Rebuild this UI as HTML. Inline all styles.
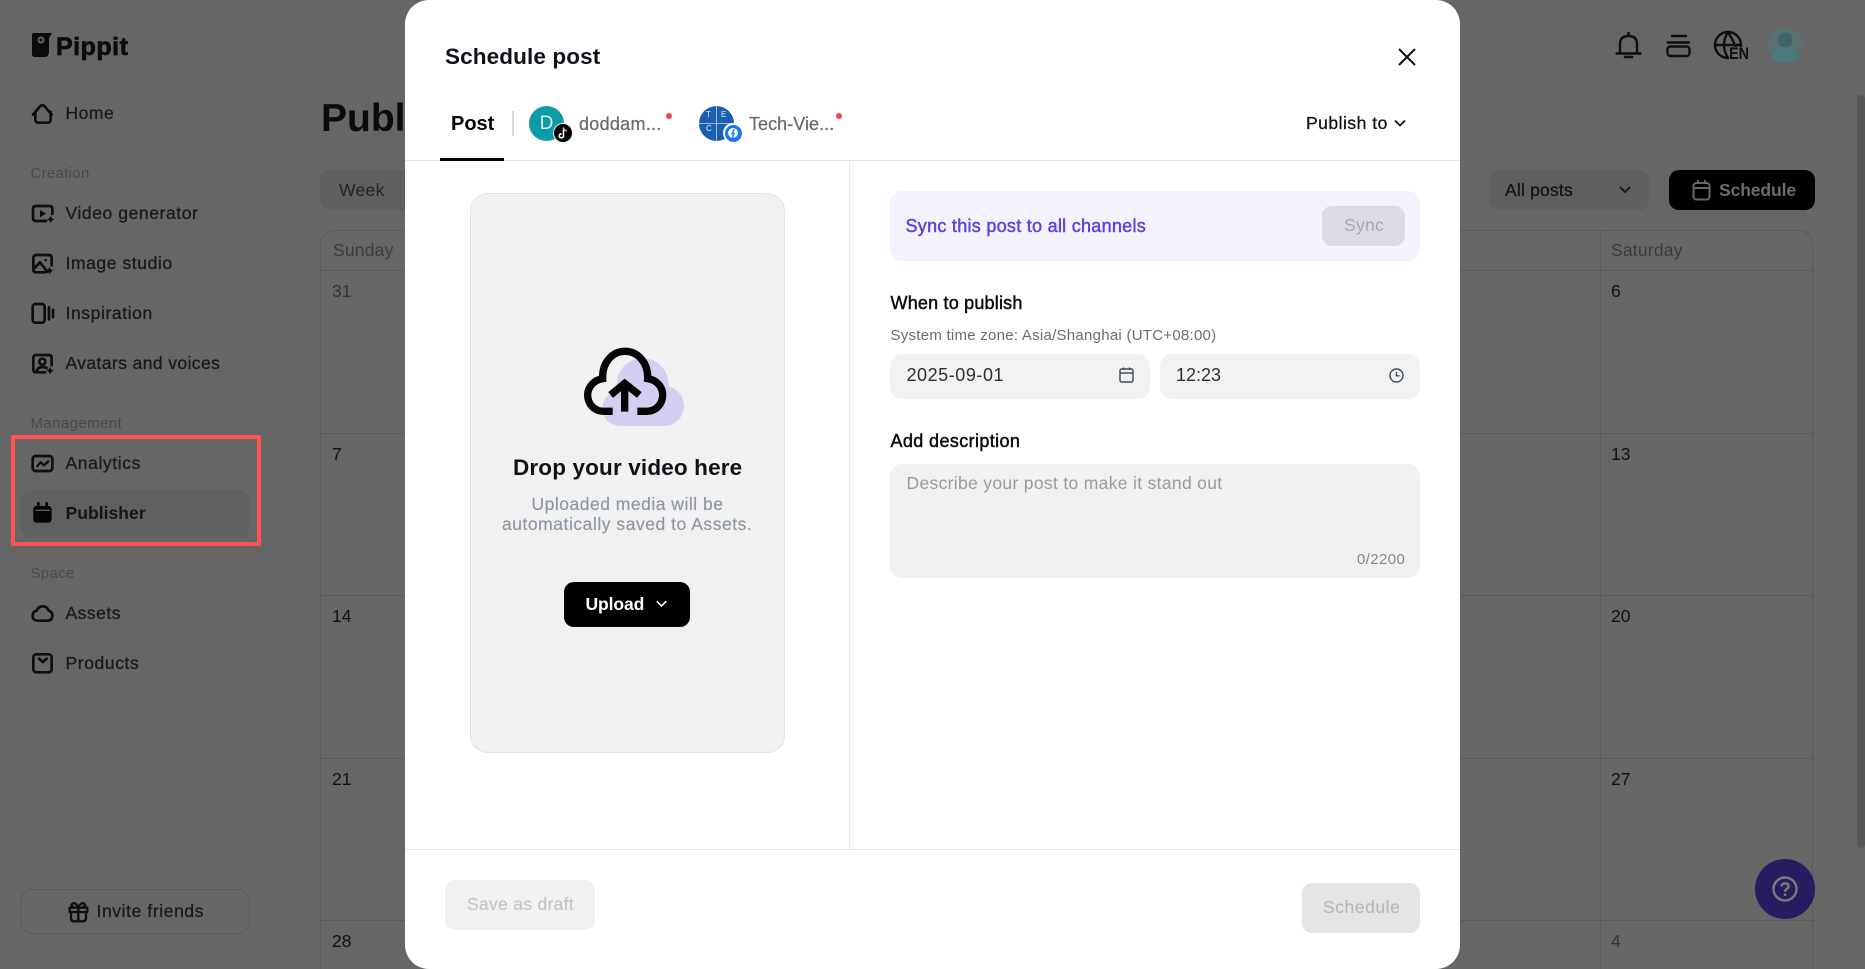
<!DOCTYPE html>
<html lang="en"><head><meta charset="utf-8"><title>Schedule post</title>
<style>
html,body{margin:0;padding:0;width:1865px;height:969px;overflow:hidden;background:#666;font-family:"Liberation Sans",Arial,sans-serif}
#w{position:relative;width:1865px;height:969px;overflow:hidden;background:#666;filter:blur(.3px)}
.a{position:absolute}
.t{position:absolute;white-space:nowrap;line-height:24px;height:24px;font-size:17.5px}
.s{color:#1a1a1a;letter-spacing:.5px;left:65.5px;-webkit-text-stroke:.3px currentColor}
.l{color:#484848;font-size:15px;letter-spacing:.3px;left:30.5px}
.m{-webkit-text-stroke:.45px currentColor}
.b{font-weight:700}
.d{color:#333;left:333px}
.line{position:absolute;background:#5a5a5a}
svg{position:absolute;overflow:visible}
</style></head><body><div id="w">

<!-- background page -->
<svg style="left:32px;top:32px" width="20" height="26" viewBox="0 0 20 26"><path d="M0 3Q0 1 2 1H20L17 6V20Q17 25 12 25H3Q0 25 0 22Z" fill="#0b0b0b"/><circle cx="9" cy="8" r="3.5" fill="#666"/><circle cx="9" cy="8" r="1.6" fill="#0b0b0b"/></svg>
<div class="t b" style="left:56px;top:35px;font-size:25px;letter-spacing:.5px;color:#0d0d0d;-webkit-text-stroke:.7px #0d0d0d">Pippit</div>

<div class="t s" style="top:101px">Home</div>
<div class="t l" style="top:162px">Creation</div>
<div class="t s" style="top:201px;letter-spacing:.58px">Video generator</div>
<div class="t s" style="top:251px;letter-spacing:.58px">Image studio</div>
<div class="t s" style="top:301px;letter-spacing:.6px">Inspiration</div>
<div class="t s" style="top:351px;letter-spacing:.4px">Avatars and voices</div>
<div class="t l" style="top:412px;letter-spacing:.4px">Management</div>
<div class="t s" style="top:451px;letter-spacing:.6px">Analytics</div>
<div class="a" style="left:20px;top:490px;width:230px;height:48px;background:#5f6061;border-radius:12px"></div>
<div class="t s b" style="top:501px;letter-spacing:.05px;color:#151515;-webkit-text-stroke:0">Publisher</div>
<div class="t l" style="top:562px">Space</div>
<div class="t s" style="top:601px">Assets</div>
<div class="t s" style="top:651px;letter-spacing:.6px">Products</div>
<div class="a" style="left:20px;top:889px;width:228px;height:43px;border:1px solid #5a5a5a;border-radius:13px"></div>
<div class="t s" style="left:96.5px;top:899px;letter-spacing:.6px">Invite friends</div>

<!-- sidebar icons, coordinates in 3x units -->
<svg style="left:0;top:0" width="410" height="969" viewBox="0 0 1230 2907" fill="none" stroke="#0f0f0f" stroke-width="8" stroke-linejoin="round" stroke-linecap="round">
<path d="M99 344L120 319Q127 312 134 319L155 344M106 336V358Q106 368 116 368H142Q152 368 152 358V336"/>
<path d="M138 663H108Q99 663 99 654V627Q99 618 108 618H148Q157 618 157 627V642"/>
<path d="M120 630V652L138 641Z" fill="#0f0f0f" stroke="none"/>
<path d="M152 646Q154 656 164 658Q154 660 152 670Q150 660 140 658Q150 656 152 646Z" fill="#0f0f0f" stroke="none"/>
<path d="M136 817H109Q100 817 100 808V774Q100 765 109 765H146Q155 765 155 774V796"/>
<path d="M102 806L120 787L142 815"/><circle cx="137" cy="780" r="4" fill="#0f0f0f" stroke="none"/>
<path d="M149 800Q151 810 161 812Q151 814 149 824Q147 814 137 812Q147 810 149 800Z" fill="#0f0f0f" stroke="none"/>
<rect x="98" y="912" width="36" height="56" rx="8"/><path d="M147 922V958M159 929V951"/>
<path d="M136 1117H109Q100 1117 100 1108V1074Q100 1065 109 1065H146Q155 1065 155 1074V1096"/>
<circle cx="127" cy="1085" r="9"/><path d="M110 1116Q112 1101 127 1101Q135 1101 140 1104"/>
<path d="M150 1100Q152 1110 162 1112Q152 1114 150 1124Q148 1114 138 1112Q148 1110 150 1100Z" fill="#0f0f0f" stroke="none"/>
<rect x="98" y="1368" width="59" height="45" rx="9"/><path d="M112 1398L122 1387L132 1396L145 1384" stroke-width="7"/>
<rect x="100" y="1518" width="55" height="50" rx="10" fill="#050505" stroke="none"/><path d="M115 1510V1520M140 1510V1520" stroke="#050505"/><path d="M108 1531H148" stroke="#5a5a5a" stroke-width="4"/>
<path d="M115 1862Q97 1862 98 1846Q99 1834 110 1832Q115 1819 128 1819Q142 1819 146 1832Q158 1836 157 1848Q156 1862 142 1862Z"/>
<rect x="100" y="1963" width="55" height="54" rx="9"/><path d="M117 1976L128 1986L140 1976"/>
<path d="M213 2736H258V2754Q258 2764 248 2764H223Q213 2764 213 2754ZM209 2723H262V2736H209ZM235 2723V2764M235 2722Q226 2705 217 2711Q210 2718 222 2722M235 2722Q244 2705 253 2711Q260 2718 248 2722" stroke-width="7"/>
</svg>

<div class="t b" style="left:321px;top:99px;font-size:39px;line-height:40px;height:40px;color:#0b0b0b">Publisher</div>
<div class="a" style="left:320px;top:170px;width:120px;height:40px;background:#5f5f5f;border-radius:10px"></div>
<div class="t" style="left:339px;top:178px;color:#222;letter-spacing:.3px">Week</div>

<!-- calendar -->
<div class="a" style="left:320px;top:230px;width:1493px;height:760px;border:1px solid #5a5a5a;border-radius:14px;box-sizing:border-box"></div>
<div class="line" style="left:320px;top:270px;width:1494px;height:1px"></div>
<div class="line" style="left:320px;top:433px;width:1494px;height:1px"></div>
<div class="line" style="left:320px;top:595px;width:1494px;height:1px"></div>
<div class="line" style="left:320px;top:758px;width:1494px;height:1px"></div>
<div class="line" style="left:320px;top:920px;width:1494px;height:1px"></div>
<div class="line" style="left:1600px;top:230px;width:1px;height:739px"></div>
<div class="t" style="left:333px;top:238px;color:#3b3b3b;letter-spacing:.2px">Sunday</div>
<div class="t" style="left:1611px;top:238px;color:#3b3b3b;letter-spacing:.2px">Saturday</div>
<div class="t d" style="top:279px;left:332px">31</div>
<div class="t d" style="top:442px;left:332px;color:#111">7</div>
<div class="t d" style="top:604px;left:332px;color:#111">14</div>
<div class="t d" style="top:767px;left:332px;color:#111">21</div>
<div class="t d" style="top:929px;left:332px;color:#111">28</div>
<div class="t d" style="left:1611px;top:279px;color:#111">6</div>
<div class="t d" style="left:1611px;top:442px;color:#111">13</div>
<div class="t d" style="left:1611px;top:604px;color:#111">20</div>
<div class="t d" style="left:1611px;top:767px;color:#111">27</div>
<div class="t d" style="left:1611px;top:929px">4</div>

<!-- top right -->
<svg style="left:0;top:0" width="1865" height="969" viewBox="0 0 1865 969" fill="none" stroke="#0f0f0f" stroke-width="2.4" stroke-linecap="round" stroke-linejoin="round">
<path d="M1620 53V44Q1620 36 1628.5 36Q1637 36 1637 44V53M1616.5 53.5H1640.5"/><path d="M1625 57H1632M1628.5 33V36" stroke-width="2.6"/>
<path d="M1672 36H1686M1667.5 42.5H1689"/><rect x="1667.5" y="46.5" width="22" height="9.5" rx="3"/>
<circle cx="1728" cy="45" r="13"/><path d="M1715 45H1741M1728 32Q1720 45 1728 58M1728 32Q1736 45 1736 50"/>
</svg>
<div class="a" style="left:1729px;top:47px;width:21px;height:15px;background:#666"></div>
<div class="t b" style="left:1729px;top:44px;font-size:16.5px;letter-spacing:0;color:#0f0f0f;line-height:20px;height:20px;transform-origin:left center;transform:scaleX(.87)">EN</div>
<div class="a" style="left:1767px;top:27px;width:36px;height:36px;border-radius:50%;background:#58716f;overflow:hidden">
<div class="a" style="left:11px;top:6px;width:14px;height:14px;border-radius:5px;background:#3f6468"></div>
<div class="a" style="left:3px;top:20px;width:30px;height:26px;border-radius:50%;background:#4a7a7e"></div></div>

<div class="a" style="left:1489px;top:170px;width:160px;height:40px;background:#5f5f5f;border-radius:10px"></div>
<div class="t" style="left:1505px;top:178px;color:#151515;letter-spacing:.2px;-webkit-text-stroke:.3px #151515">All posts</div>
<svg style="left:1619px;top:185px" width="12" height="10" viewBox="0 0 12 10" fill="none" stroke="#151515" stroke-width="1.7"><path d="M1 2L6 7L11 2"/></svg>
<div class="a" style="left:1669px;top:170px;width:146px;height:40px;background:#000;border-radius:10px"></div>
<svg style="left:1692px;top:179px" width="20" height="22" viewBox="0 0 20 22" fill="none" stroke="#666" stroke-width="2"><rect x="1.5" y="4" width="16" height="16.5" rx="3"/><path d="M1.5 9H17.5M6 1V5M13 1V5"/></svg>
<div class="t b" style="left:1719px;top:178px;color:#6c6c6c;letter-spacing:-.1px">Schedule</div>

<div class="a" style="left:1857px;top:95px;width:8px;height:753px;background:#565656;border-radius:4px"></div>
<div class="a" style="left:1755px;top:859px;width:60px;height:60px;border-radius:50%;background:#261c5f"></div>
<svg style="left:1772px;top:876px" width="26" height="26" viewBox="0 0 26 26" fill="none" stroke="#7a7a7a" stroke-width="2.4"><circle cx="13" cy="13" r="11.5"/><path d="M9.5 10.5Q9.7 7.3 13 7.3Q16.5 7.3 16.5 10.3Q16.5 12 14.8 13Q13 14 13 15.8"/><circle cx="13" cy="18.7" r="1.3" fill="#7a7a7a" stroke="none"/></svg>

<!-- annotation box -->
<div class="a" style="left:11px;top:435px;width:250px;height:111px;border:4px solid #ff5252;box-sizing:border-box;border-radius:2px"></div>

<!-- modal -->
<div class="a" style="left:405px;top:0;width:1055px;height:969px;background:#fff;border-radius:24px;overflow:hidden">
<div class="a" style="left:0;top:160px;width:1055px;height:1px;background:#e6e6e6"></div>
<div class="a" style="left:444px;top:161px;width:1px;height:688px;background:#ececec"></div>
<div class="a" style="left:0;top:849px;width:1055px;height:1px;background:#e6e6e6"></div>
</div>

<div class="t b" style="left:445px;top:45px;font-size:22.5px;letter-spacing:.12px;color:#0f1218">Schedule post</div>
<svg style="left:1398px;top:48px" width="18" height="18" viewBox="0 0 18 18" fill="none" stroke="#111" stroke-width="2"><path d="M1 1L17 17M17 1L1 17"/></svg>

<div class="t b" style="left:451px;top:112px;font-size:20px;color:#050505">Post</div>
<div class="a" style="left:440px;top:158px;width:64px;height:2.5px;background:#000"></div>
<div class="a" style="left:512px;top:111px;width:2px;height:25px;background:#d9d9d9"></div>

<div class="a" style="left:529px;top:106px;width:35px;height:35px;border-radius:50%;background:#0e9ba6;color:#d8f2f2;font-size:19px;line-height:35px;text-align:center">D</div>
<div class="a" style="left:554px;top:124px;width:18px;height:18px;border-radius:50%;background:#000;border:1px solid #eee;box-sizing:content-box;margin:-1px"></div>
<svg style="left:558px;top:127px" width="10" height="12" viewBox="0 0 10 12" fill="none" stroke="#fff" stroke-width="1.6"><path d="M5.5 0.5V8.5Q5.5 10.8 3.4 10.8Q1.3 10.8 1.3 8.8Q1.3 6.8 3.6 6.8"/><path d="M5.5 1Q6 3.5 9 3.8" stroke="#f0a5b5"/></svg>
<div class="t" style="left:579px;top:112px;font-size:18px;color:#6a6a6a;letter-spacing:.28px;-webkit-text-stroke:.25px #6a6a6a">doddam...</div>
<div class="a" style="left:665.5px;top:112.5px;width:6.5px;height:6.5px;border-radius:50%;background:#ff4040"></div>

<div class="a" style="left:699px;top:106px;width:35px;height:35px;border-radius:50%;background:#1a5eb4;overflow:hidden">
<div class="a" style="left:17px;top:0;width:1px;height:35px;background:#a9bcd4"></div>
<div class="a" style="left:0;top:17px;width:35px;height:1px;background:#a9bcd4"></div>
<div class="t" style="left:7px;top:-3px;font-size:8px;color:#e7eefa">T</div>
<div class="t" style="left:22px;top:-3px;font-size:8px;color:#e7eefa">E</div>
<div class="t" style="left:7px;top:11px;font-size:8px;color:#e7eefa">C</div>
</div>
<div class="a" style="left:723px;top:123px;width:20px;height:20px;border-radius:50%;background:#fff"></div>
<div class="a" style="left:724.5px;top:124.5px;width:17px;height:17px;border-radius:50%;background:#1877f2"></div>
<div class="a" style="left:728px;top:128px;width:10px;height:10px;border-radius:50%;background:#fff"></div>
<svg style="left:731px;top:128.5px" width="5" height="10" viewBox="0 0 5 10" fill="none" stroke="#1877f2" stroke-width="1.4"><path d="M3.8.8Q2 .8 2 2.6V9.5M.4 4.6H3.8"/></svg>
<div class="t" style="left:749px;top:112px;font-size:18px;color:#6a6a6a;letter-spacing:.05px;-webkit-text-stroke:.25px #6a6a6a">Tech-Vie...</div>
<div class="a" style="left:835.5px;top:112.5px;width:6.5px;height:6.5px;border-radius:50%;background:#ff4040"></div>

<div class="t" style="left:1306px;top:111px;color:#0b0b0b;letter-spacing:.5px;-webkit-text-stroke:.25px #0b0b0b">Publish to</div>
<svg style="left:1394px;top:118.5px" width="12" height="9" viewBox="0 0 12 9" fill="none" stroke="#111" stroke-width="1.7"><path d="M1 1.5L6 6.5L11 1.5"/></svg>

<!-- upload panel -->
<div class="a" style="left:470px;top:193px;width:315px;height:560px;box-sizing:border-box;background:#f1f1f1;border:1px solid #e2e2e2;border-radius:18px"></div>
<svg style="left:460px;top:320px" width="340" height="320" viewBox="0 0 1020 960">
<g fill="#d4cff0"><circle cx="548" cy="193" r="78"/><circle cx="612" cy="258" r="60"/><circle cx="480" cy="265" r="53"/><rect x="480" y="230" width="130" height="88"/></g>
<g fill="none" stroke="#050505" stroke-width="22"><path d="M458 274H432C403 274 383 252 383 225C383 200 403 180 428 176C426 130 455 94 495 94C535 94 565 130 563 176C590 180 608 200 608 225C608 252 588 274 560 274H532"/>
<path d="M494 275V190M452 225L494 190L538 225"/></g></svg>
<div class="t b" style="left:513px;top:456px;font-size:22.5px;letter-spacing:.15px;color:#101218">Drop your video here</div>
<div class="t" style="left:531.5px;top:492px;color:#8c96a3;letter-spacing:.5px;-webkit-text-stroke:.15px #8c96a3">Uploaded media will be</div>
<div class="t" style="left:502px;top:512px;color:#8c96a3;letter-spacing:.53px;-webkit-text-stroke:.15px #8c96a3">automatically saved to Assets.</div>
<div class="a" style="left:564px;top:582px;width:126px;height:45px;background:#000;border-radius:10px"></div>
<div class="t b" style="left:585.5px;top:592px;color:#fff;letter-spacing:-.1px">Upload</div>
<svg style="left:656px;top:600px" width="11" height="8" viewBox="0 0 11 8" fill="none" stroke="#fff" stroke-width="1.6"><path d="M.8 1.2L5.5 6L10.2 1.2"/></svg>

<!-- right form -->
<div class="a" style="left:890px;top:191px;width:530px;height:70px;background:#f4f3fd;border-radius:12px"></div>
<div class="t m" style="left:905.5px;top:214px;color:#5c40e2;font-size:18px;letter-spacing:.28px">Sync this post to all channels</div>
<div class="a" style="left:1322px;top:206px;width:83px;height:40px;background:#dcdbe4;border-radius:10px"></div>
<div class="t" style="left:1344px;top:213px;color:#a8a8b2;letter-spacing:.3px">Sync</div>
<div class="t m" style="left:890.5px;top:291px;color:#0b0b0b;font-size:18px;letter-spacing:.2px">When to publish</div>
<div class="t" style="left:890.5px;top:323.5px;font-size:15px;color:#6c6c6c;letter-spacing:.26px">System time zone: Asia/Shanghai (UTC+08:00)</div>
<div class="a" style="left:890px;top:354px;width:260px;height:45px;background:#f2f2f2;border-radius:12px"></div>
<div class="a" style="left:1160px;top:354px;width:260px;height:45px;background:#f2f2f2;border-radius:12px"></div>
<div class="t" style="left:906.5px;top:363px;font-size:18px;color:#2c2f36;letter-spacing:.55px">2025-09-01</div>
<div class="t" style="left:1176px;top:363px;font-size:18px;color:#2c2f36">12:23</div>
<svg style="left:1119px;top:367px" width="15" height="16" viewBox="0 0 15 16" fill="none" stroke="#3b4a5c" stroke-width="1.4"><rect x="1" y="2" width="13" height="13" rx="1.5"/><path d="M1 6H14M4.5 .5V3M10.5 .5V3"/></svg>
<svg style="left:1389px;top:367.5px" width="15" height="15" viewBox="0 0 15 15" fill="none" stroke="#3b4a5c" stroke-width="1.4"><circle cx="7.5" cy="7.5" r="6.5"/><path d="M7.5 4V7.8H10.5"/></svg>
<div class="t m" style="left:890.5px;top:429px;color:#0b0b0b;font-size:18px;letter-spacing:.38px">Add description</div>
<div class="a" style="left:890px;top:464px;width:530px;height:114px;background:#f1f1f1;border-radius:12px"></div>
<div class="t" style="left:906.5px;top:471px;color:#9a9a9a;letter-spacing:.32px">Describe your post to make it stand out</div>
<div class="t" style="left:1357px;top:547.5px;font-size:15px;color:#7f8894;letter-spacing:.4px">0/2200</div>

<!-- footer -->
<div class="a" style="left:445px;top:880px;width:150px;height:50px;background:#f1f1f1;border-radius:10px"></div>
<div class="t" style="left:467px;top:892px;color:#c4c4c4;letter-spacing:.3px;-webkit-text-stroke:.15px #c4c4c4">Save as draft</div>
<div class="a" style="left:1302px;top:883px;width:118px;height:50px;background:#e4e4e4;border-radius:10px"></div>
<div class="t" style="left:1323px;top:895px;color:#b8b8b8;letter-spacing:.55px;-webkit-text-stroke:.15px #b8b8b8">Schedule</div>
</div></body></html>
